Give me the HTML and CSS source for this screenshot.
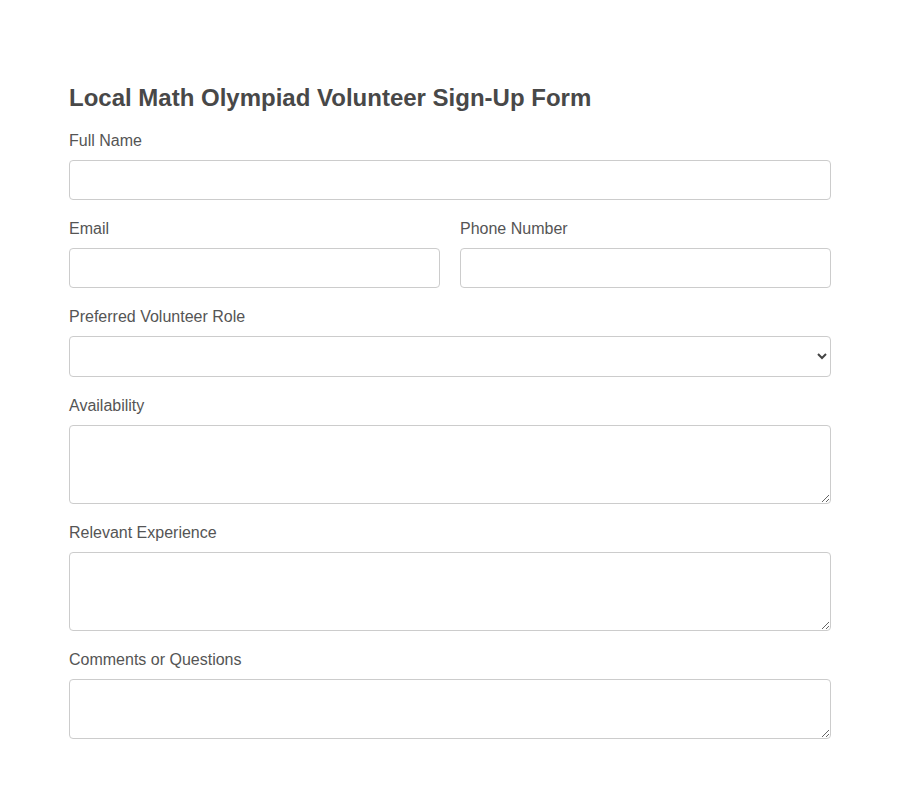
FILE: index.html
```html
<!DOCTYPE html>
<html lang="en">
<head>
<meta charset="utf-8">
<title>Local Math Olympiad Volunteer Sign-Up Form</title>
<link rel="stylesheet" href="styles.css">
</head>
<body>
<main class="container">
  <h1 class="title">Local Math Olympiad Volunteer Sign-Up Form</h1>
  <form class="form">
    <div class="group">
      <label class="label" for="name">Full Name</label>
      <input class="field" id="name" type="text">
    </div>
    <div class="row">
      <div class="group">
        <label class="label" for="email">Email</label>
        <input class="field" id="email" type="email">
      </div>
      <div class="group">
        <label class="label" for="phone">Phone Number</label>
        <input class="field" id="phone" type="tel">
      </div>
    </div>
    <div class="group">
      <label class="label" for="role">Preferred Volunteer Role</label>
      <select class="field select" id="role">
        <option></option>
      </select>
    </div>
    <div class="group">
      <label class="label" for="avail">Availability</label>
      <textarea class="field area" id="avail"></textarea>
    </div>
    <div class="group">
      <label class="label" for="exp">Relevant Experience</label>
      <textarea class="field area" id="exp"></textarea>
    </div>
    <div class="group">
      <label class="label" for="comments">Comments or Questions</label>
      <textarea class="field area small" id="comments"></textarea>
    </div>
  </form>
</main>
</body>
</html>
```
FILE: styles.css
```css
html, body {
  margin: 0;
  padding: 0;
  background: #ffffff;
}
body {
  font-family: "Liberation Sans", Arial, sans-serif;
  color: #444;
}
.container {
  padding: 84px 69px 40px;
}
.title {
  margin: 0 0 18px;
  font-size: 24px;
  line-height: 28px;
  font-weight: bold;
  color: #484848;
}
.form {
  display: flex;
  flex-direction: column;
  gap: 18px;
}
.row {
  display: grid;
  grid-template-columns: 1fr 1fr;
  gap: 20px;
}
.group {
  display: flex;
  flex-direction: column;
}
.label {
  font-size: 16px;
  line-height: 20px;
  color: #555;
  padding-top: 1px;
  margin-bottom: 9px;
}
.field {
  box-sizing: border-box;
  width: 100%;
  height: 40px;
  margin: 0;
  padding: 10px;
  font-family: "Liberation Sans", Arial, sans-serif;
  font-size: 16px;
  border: 1px solid #ccc;
  border-radius: 4px;
  background: #fff;
  color: #444;
}
.select {
  height: 41px;
}
.area {
  height: 79px;
  resize: vertical;
}
.area.small {
  height: 60px;
}
```
